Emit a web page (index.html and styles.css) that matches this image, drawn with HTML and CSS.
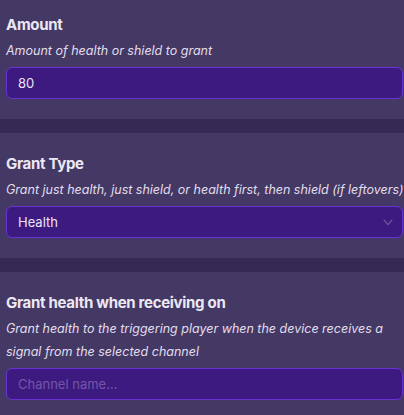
FILE: index.html
```html
<!DOCTYPE html>
<html>
<head>
<meta charset="utf-8">
<link rel="stylesheet" href="styles.css">
</head>
<body>
<div class="panel">
  <section class="field first">
    <div class="title">Amount</div>
    <div class="desc">Amount of health or shield to grant</div>
    <div class="box"><span class="value">80</span></div>
  </section>
  <div class="band"></div>
  <section class="field">
    <div class="title">Grant Type</div>
    <div class="desc single">Grant just health, just shield, or health first, then shield (if leftovers)</div>
    <div class="box select">
      <span class="value">Health</span>
      <svg class="chev" width="10" height="7" viewBox="0 0 10 7"><path d="M0.8 0.8 L5 5.6 L9.2 0.8" fill="none" stroke="#6f5c9c" stroke-width="1.2"/></svg>
    </div>
  </section>
  <div class="band"></div>
  <section class="field">
    <div class="title">Grant health when receiving on</div>
    <div class="desc">Grant health to the triggering player when the device receives a signal from the selected channel</div>
    <div class="box"><span class="placeholder">Channel name...</span></div>
  </section>
</div>
</body>
</html>
```
FILE: styles.css
```css
html, body {
  margin: 0;
  padding: 0;
  background: #443865;
}
body {
  font-family: Inter, "Noto Sans", sans-serif;
  width: 404px;
  height: 415px;
  overflow: hidden;
}
.panel {
  display: flex;
  flex-direction: column;
}
.field {
  padding: 19px 1px 20px 6px;
  display: flex;
  flex-direction: column;
}
.field.first {
  padding-top: 13px;
}
.band {
  height: 14px;
  background: #352a54;
}
.title {
  font-size: 15px;
  line-height: 24px;
  font-weight: 700;
  letter-spacing: -0.3px;
  color: #ece8f3;
}
.desc {
  margin-top: 2px;
  font-size: 12.5px;
  line-height: 23px;
  font-style: italic;
  color: #e2deec;
}
.desc.single {
  white-space: nowrap;
}
.box {
  margin-top: 5px;
  height: 32px;
  box-sizing: border-box;
  border: 1px solid #6933d4;
  border-radius: 6px;
  background: #3d1a7f;
  display: flex;
  align-items: center;
  padding: 0 11px;
  font-size: 13px;
}
.value {
  color: #ebe4f6;
}
.placeholder {
  color: #7356a8;
}
.select {
  justify-content: space-between;
}
.chev {
  margin-right: -2px;
}
```
